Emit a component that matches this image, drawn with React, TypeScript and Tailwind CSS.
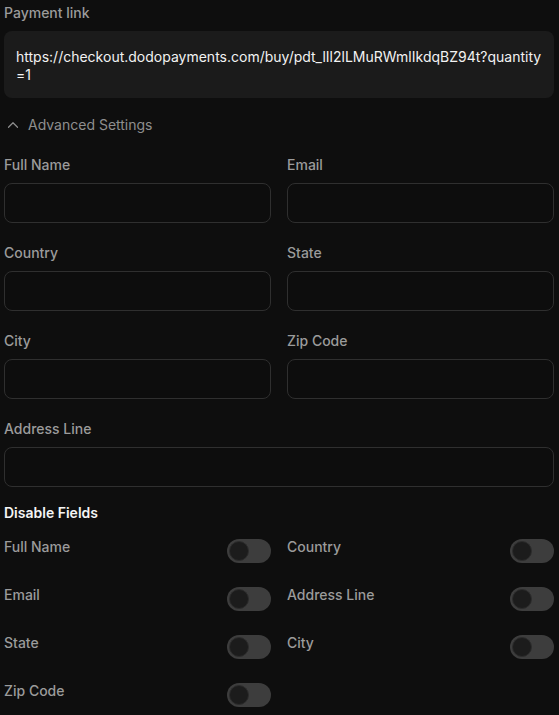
import React from "react";

const fields = [
  ["Full Name", "Email"],
  ["Country", "State"],
  ["City", "Zip Code"],
];

const disable = [
  ["Full Name", "Country"],
  ["Email", "Address Line"],
  ["State", "City"],
  ["Zip Code", null],
];

function Toggle() {
  return (
    <div className="w-11 h-6 rounded-full bg-[#3d3d3d] p-[2px] flex items-center">
      <div className="w-5 h-5 rounded-full bg-[#1c1c1c] border border-[#2c2c2c]" />
    </div>
  );
}

function Field({ label }: { label: string }) {
  return (
    <div className="flex flex-col gap-2">
      <label className="text-sm leading-5 font-medium text-[#9b9b9b]">{label}</label>
      <div className="h-10 rounded-lg border border-[#2f2f2f] bg-[#0d0d0d]" />
    </div>
  );
}

export default function App() {
  return (
    <div
      className="min-h-screen bg-[#0e0e0e] pl-1 pr-[5px] pt-[3px] pb-4"
      style={{ fontFamily: "Inter, 'Noto Sans', sans-serif" }}
    >
      <div className="text-sm leading-5 font-medium text-[#9b9b9b]">Payment link</div>
      <div className="mt-2 rounded-lg bg-[#1b1b1b] px-3 pt-[17px] pb-[14px] text-sm leading-[18px] text-[#f2f2f2] break-all">
        https://checkout.dodopayments.com/buy/pdt_lIl2lLMuRWmlIkdqBZ94t?quantity=1
      </div>
      <div className="mt-[17px] flex items-center gap-[6px] text-sm leading-5 text-[#8e8e8e]">
        <svg width="18" height="18" viewBox="0 0 24 24" fill="none" stroke="#8e8e8e" strokeWidth="1.6" strokeLinecap="round" strokeLinejoin="round">
          <path d="m18 15-6-6-6 6" />
        </svg>
        <span>Advanced Settings</span>
      </div>
      <div className="mt-[20px] grid grid-cols-2 gap-x-4 gap-y-5">
        {fields.map(([a, b]) => (
          <React.Fragment key={a}>
            <Field label={a} />
            <Field label={b} />
          </React.Fragment>
        ))}
        <div className="col-span-2">
          <Field label="Address Line" />
        </div>
      </div>
      <div className="mt-4 text-sm leading-5 font-semibold text-[#f5f5f5]">Disable Fields</div>
      <div className="mt-[16px] grid grid-cols-2 gap-x-4 gap-y-6">
        {disable.map(([a, b]) => (
          <React.Fragment key={a}>
            <div className="flex items-center justify-between">
              <span className="text-sm leading-5 font-medium text-[#9b9b9b] -mt-2">{a}</span>
              <Toggle />
            </div>
            {b ? (
              <div className="flex items-center justify-between">
                <span className="text-sm leading-5 font-medium text-[#9b9b9b] -mt-2">{b}</span>
                <Toggle />
              </div>
            ) : (
              <div />
            )}
          </React.Fragment>
        ))}
      </div>
    </div>
  );
}
